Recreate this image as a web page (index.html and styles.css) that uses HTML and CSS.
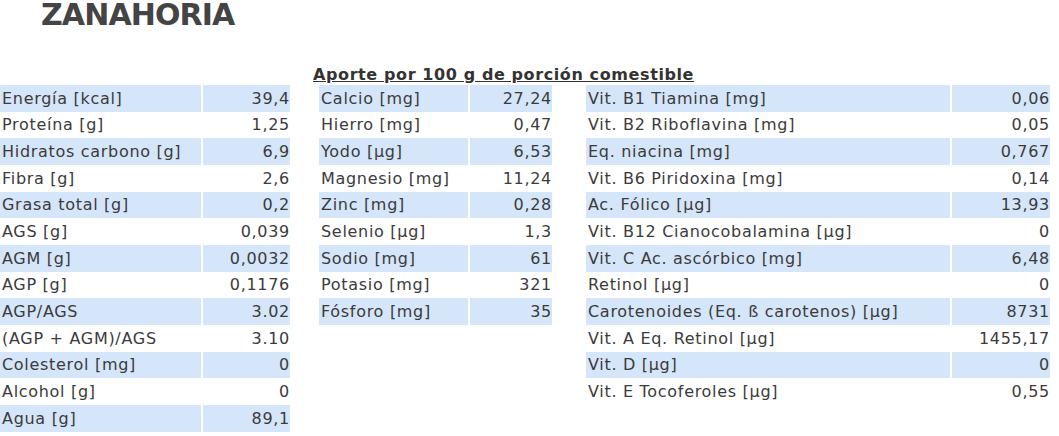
FILE: index.html
```html
<!DOCTYPE html>
<html lang="es">
<head>
<meta charset="utf-8">
<title>Zanahoria</title>
<link rel="stylesheet" href="styles.css">
</head>
<body>
<h1 class="title">ZANAHORIA</h1>
<section class="panel">
  <h2 class="caption">Aporte por 100 g de porción comestible</h2>
  <div class="tables">
    <table class="nt nt-1">
      <tr><td>Energía [kcal]</td><td>39,4</td></tr>
      <tr><td>Proteína [g]</td><td>1,25</td></tr>
      <tr><td>Hidratos carbono [g]</td><td>6,9</td></tr>
      <tr><td>Fibra [g]</td><td>2,6</td></tr>
      <tr><td>Grasa total [g]</td><td>0,2</td></tr>
      <tr><td>AGS [g]</td><td>0,039</td></tr>
      <tr><td>AGM [g]</td><td>0,0032</td></tr>
      <tr><td>AGP [g]</td><td>0,1176</td></tr>
      <tr><td>AGP/AGS</td><td>3.02</td></tr>
      <tr><td>(AGP + AGM)/AGS</td><td>3.10</td></tr>
      <tr><td>Colesterol [mg]</td><td>0</td></tr>
      <tr><td>Alcohol [g]</td><td>0</td></tr>
      <tr><td>Agua [g]</td><td>89,1</td></tr>
    </table>
    <table class="nt nt-2">
      <tr><td>Calcio [mg]</td><td>27,24</td></tr>
      <tr><td>Hierro [mg]</td><td>0,47</td></tr>
      <tr><td>Yodo [µg]</td><td>6,53</td></tr>
      <tr><td>Magnesio [mg]</td><td>11,24</td></tr>
      <tr><td>Zinc [mg]</td><td>0,28</td></tr>
      <tr><td>Selenio [µg]</td><td>1,3</td></tr>
      <tr><td>Sodio [mg]</td><td>61</td></tr>
      <tr><td>Potasio [mg]</td><td>321</td></tr>
      <tr><td>Fósforo [mg]</td><td>35</td></tr>
    </table>
    <table class="nt nt-3">
      <tr><td>Vit. B1 Tiamina [mg]</td><td>0,06</td></tr>
      <tr><td>Vit. B2 Riboflavina [mg]</td><td>0,05</td></tr>
      <tr><td>Eq. niacina [mg]</td><td>0,767</td></tr>
      <tr><td>Vit. B6 Piridoxina [mg]</td><td>0,14</td></tr>
      <tr><td>Ac. Fólico [µg]</td><td>13,93</td></tr>
      <tr><td>Vit. B12 Cianocobalamina [µg]</td><td>0</td></tr>
      <tr><td>Vit. C Ac. ascórbico [mg]</td><td>6,48</td></tr>
      <tr><td>Retinol [µg]</td><td>0</td></tr>
      <tr><td>Carotenoides (Eq. ß carotenos) [µg]</td><td>8731</td></tr>
      <tr><td>Vit. A Eq. Retinol [µg]</td><td>1455,17</td></tr>
      <tr><td>Vit. D [µg]</td><td>0</td></tr>
      <tr><td>Vit. E Tocoferoles [µg]</td><td>0,55</td></tr>
    </table>
  </div>
</section>
</body>
</html>
```

FILE: styles.css
```css
html, body {
  margin: 0;
  padding: 0;
  background: #ffffff;
}

body {
  font-family: "DejaVu Sans", Verdana, sans-serif;
  color: #3b3b3b;
}

.title {
  margin: 0;
  padding: 0 0 0 41px;
  height: 62px;
  font-size: 30px;
  line-height: 30px;
  letter-spacing: -0.9px;
  font-weight: bold;
  color: #444444;
}

.panel {
  display: flex;
  flex-direction: column;
}

.caption {
  margin: 0 0 0 313px;
  height: 23px;
  padding-top: 4px;
  box-sizing: border-box;
  font-size: 16px;
  line-height: 18px;
  letter-spacing: 0.6px;
  font-weight: bold;
  text-decoration: underline;
  color: #333333;
  white-space: nowrap;
}

.tables {
  display: flex;
  align-items: flex-start;
}

.nt {
  border-collapse: separate;
  border-spacing: 0;
  table-layout: fixed;
  font-size: 16px;
  letter-spacing: 0.7px;
}

.nt tr {
  height: 26.67px;
}

.nt td {
  padding: 0 0 0 2px;
  white-space: nowrap;
  vertical-align: middle;
}

.nt td + td {
  text-align: right;
  padding: 0 0 0 0;
  border-left: 2px solid #ffffff;
}

.nt tr:nth-child(odd) td {
  background: #d5e5fa;
}

.nt-1 { width: 290px; }
.nt-1 td:first-child { width: 199px; }

.nt-2 { width: 233px; margin-left: 29px; }
.nt-2 td:first-child { width: 147px; }

.nt-3 { width: 464px; margin-left: 34px; }
.nt-3 td:first-child { width: 362px; }
```
